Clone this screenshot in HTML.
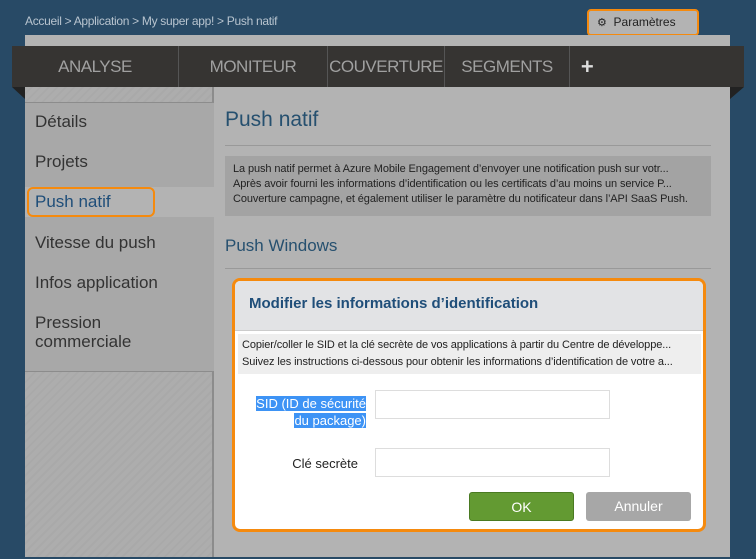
<!DOCTYPE html>
<html><head><meta charset="utf-8"><style>
*{margin:0;padding:0;box-sizing:border-box}
body{width:756px;height:559px;background:#284a66;font-family:"Liberation Sans",sans-serif;position:relative;overflow:hidden}
.a{position:absolute}
.crumb{left:25px;top:14px;font-size:12px;color:#b8c4cf;letter-spacing:-0.3px}
.set{left:587px;top:9px;width:112px;height:27px;border:2px solid #f58a0e;border-radius:4px;background:#b3b3b3;font-size:12px;color:#222;padding:4px 0 0 8px}
.panel{left:25px;top:35px;width:705px;height:522px;background:#b3b3b3}
.nav{left:12px;top:46px;width:732px;height:41px;background:#363432;color:#a0a0a0;font-size:17px}
.nav div{position:absolute;top:0;height:41px;line-height:41px;text-align:center;border-left:1px solid #555;letter-spacing:-0.5px}
.side{left:25px;top:87px;width:189px;height:470px;background:repeating-linear-gradient(135deg,#adadad 0 4px,#a9a9a9 4px 6px);border-right:2px solid #8c8c8c}
.menu{left:25px;top:102px;width:189px;height:270px;background:#a8a8a8;border-top:1px solid #8c8c8c;border-bottom:1px solid #8c8c8c}
.mi{left:35px;font-size:17px;color:#333}
.hl{left:25px;top:187px;width:191px;height:30px;background:#b3b3b3}
.pn{left:27px;top:187px;width:128px;height:30px;border:2px solid #f58a0e;border-radius:6px}
h1{position:absolute;left:225px;top:108px;font-size:21px;font-weight:normal;color:#26506f}
.ln{left:225px;height:1px;background:#999;width:486px}
.info{left:225px;top:156px;width:486px;height:60px;background:#a3a3a3;font-size:11px;color:#222;line-height:15px;padding:6px 8px;white-space:nowrap;overflow:hidden;letter-spacing:-0.1px}
h2{position:absolute;left:225px;top:236px;font-size:17px;font-weight:normal;color:#26506f}
.dlg{left:232px;top:278px;width:474px;height:254px;border:3px solid #f58a0e;border-radius:8px;background:#fff;overflow:hidden}
.dh{height:50px;background:#e2e3e5;border-bottom:1px solid #ccc;font-weight:bold;color:#1f4e79;font-size:15px;padding:14px 0 0 14px}
.dt{position:absolute;left:3px;top:53px;width:463px;height:40px;background:#eeeeee;font-size:11px;color:#222;line-height:17px;padding:3px 4px;white-space:nowrap;overflow:hidden;letter-spacing:-0.1px}
.inp{position:absolute;width:235px;height:29px;border:1px solid #ddd;background:#fff}
.btn{position:absolute;top:211px;width:105px;height:29px;border-radius:3px;color:#fff;font-size:14px;text-align:center;line-height:28px}
</style></head><body>
<div class="a crumb">Accueil &gt; Application &gt; My super app! &gt; Push natif</div>
<div class="a set"><span style="font-size:11px">⚙</span>&nbsp; Paramètres</div>
<div class="a panel"></div>
<div class="a side"></div>
<div class="a menu"></div>
<div class="a" style="left:12px;top:87px;width:0;height:0;border-top:12px solid #222;border-left:13px solid transparent"></div>
<div class="a" style="left:730px;top:87px;width:0;height:0;border-top:12px solid #222;border-right:14px solid transparent"></div>
<div class="a nav">
<div style="left:0;width:166px;border:none">ANALYSE</div>
<div style="left:166px;width:149px">MONITEUR</div>
<div style="left:315px;width:117px">COUVERTURE</div>
<div style="left:432px;width:125px">SEGMENTS</div>
<div style="left:557px;width:35px;color:#ddd;font-size:22px;font-weight:bold">+</div>
</div>
<div class="a hl"></div>
<div class="a mi" style="top:112px">Détails</div>
<div class="a mi" style="top:152px">Projets</div>
<div class="a mi" style="top:192px;color:#1f4e79">Push natif</div>
<div class="a pn"></div>
<div class="a mi" style="top:233px">Vitesse du push</div>
<div class="a mi" style="top:273px">Infos application</div>
<div class="a mi" style="top:313px;line-height:19px">Pression<br>commerciale</div>
<h1>Push natif</h1>
<div class="a ln" style="top:145px"></div>
<div class="a info">La push natif permet à Azure Mobile Engagement d’envoyer une notification push sur votr...<br>Après avoir fourni les informations d’identification ou les certificats d’au moins un service P...<br>Couverture campagne, et également utiliser le paramètre du notificateur dans l’API SaaS Push.</div>
<h2>Push Windows</h2>
<div class="a ln" style="top:268px"></div>
<div class="a dlg">
<div class="dh">Modifier les informations d’identification</div>
<div class="dt">Copier/coller le SID et la clé secrète de vos applications à partir du Centre de développe...<br>Suivez les instructions ci-dessous pour obtenir les informations d’identification de votre a...</div>
<div style="position:absolute;left:14px;top:114px;width:117px;text-align:right;font-size:13px;line-height:17px;color:#fff"><span style="background:#3d93f5">SID (ID de sécurité<br>du package)</span></div>
<div class="inp" style="left:140px;top:109px"></div>
<div style="position:absolute;left:20px;top:175px;width:103px;text-align:right;font-size:13px;color:#222">Clé secrète</div>
<div class="inp" style="left:140px;top:167px"></div>
<div class="btn" style="left:234px;background:#639a32;border:1px solid #4a7a22">OK</div>
<div class="btn" style="left:351px;background:#a7a7a7">Annuler</div>
</div>
</body></html>
